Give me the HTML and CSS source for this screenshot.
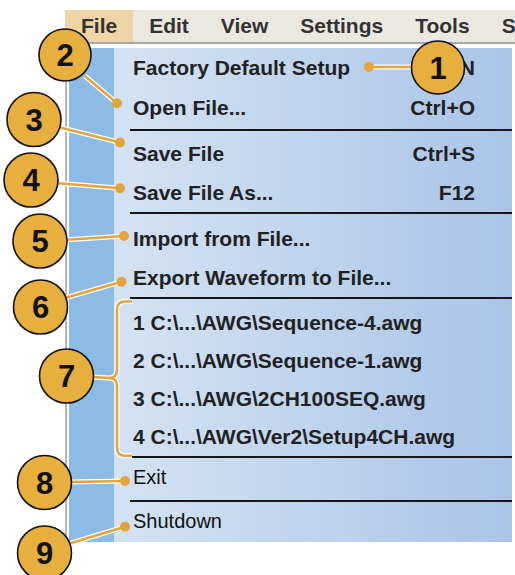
FILE: index.html
```html
<!DOCTYPE html>
<html lang="en">

<head>
  <meta charset="UTF-8">
  <meta name="viewport" content="width=device-width, initial-scale=1.0">
  <title>File Menu</title>

  <link rel="stylesheet" href="styles.css">
</head>

<body>
  <main class="page">
    <nav class="menubar">
      <span class="menu-title active">File</span>
      <span class="menu-title">Edit</span>
      <span class="menu-title">View</span>
      <span class="menu-title">Settings</span>
      <span class="menu-title">Tools</span>
      <span class="menu-title">System</span>
    </nav>

    <section class="frame">
      <div class="menu">
        <div class="stripe"></div>
        <ul class="panel">
          <li class="item tall"><span>Factory Default Setup</span><span>Ctrl+N</span></li>
          <li class="item tall"><span>Open File...</span><span>Ctrl+O</span></li>
          <li class="sep sep-first"></li>
          <li class="item"><span>Save File</span><span>Ctrl+S</span></li>
          <li class="item"><span>Save File As...</span><span>F12</span></li>
          <li class="sep"></li>
          <li class="item"><span>Import from File...</span></li>
          <li class="item"><span>Export Waveform to File...</span></li>
          <li class="sep"></li>
          <li class="item short"><span>1 C:\...\AWG\Sequence-4.awg</span></li>
          <li class="item short"><span>2 C:\...\AWG\Sequence-1.awg</span></li>
          <li class="item short"><span>3 C:\...\AWG\2CH100SEQ.awg</span></li>
          <li class="item short"><span>4 C:\...\AWG\Ver2\Setup4CH.awg</span></li>
          <li class="sep sep-tight"></li>
          <li class="item short plain"><span>Exit</span></li>
          <li class="sep sep-tight sep-low"></li>
          <li class="item short plain"><span>Shutdown</span></li>
        </ul>
      </div>
    </section>

    <!-- callouts sit on top of the menu -->
    <svg class="callouts" width="515" height="575" viewBox="0 0 515 575">
      <defs>
        <g id="leaders">
          <path d="M369 67 H412" />
          <path d="M85 76 L117 103.3" />
          <path d="M58 127 L120 142.5" />
          <path d="M55 183 L120 188.3" />
          <path d="M64 240 L124 236" />
          <path d="M65 298 L121.5 281.7" />
          <path d="M92 377 L109 378" />
          <path d="M132 301.5 H125 Q117 301.5 117 309.5 V370 Q117 378 109 378 Q117 378 117 386 V447.7 Q117 455.7 125 455.7 H132" />
          <path d="M70 482 L125 481" />
          <path d="M68 544 L125 526.7" />
        </g>
      </defs>
      <use href="#leaders" class="halo" />
      <use href="#leaders" class="leader" />

      <g class="dots">
        <circle cx="369" cy="67" r="5" />
        <circle cx="117" cy="103.3" r="5" />
        <circle cx="120" cy="142.5" r="5" />
        <circle cx="120" cy="188.3" r="5" />
        <circle cx="124" cy="236" r="5" />
        <circle cx="121.5" cy="281.7" r="5" />
        <circle cx="125" cy="481" r="5" />
        <circle cx="125" cy="526.7" r="5" />
      </g>

      <g class="badges">
        <circle cx="438" cy="67.5" r="26.5" />
        <circle cx="65" cy="55" r="26" />
        <circle cx="34" cy="119.5" r="27" />
        <circle cx="31" cy="180" r="27" />
        <circle cx="40" cy="241" r="27" />
        <circle cx="40.5" cy="307" r="27" />
        <circle cx="66.5" cy="376" r="27" />
        <circle cx="44.5" cy="482.5" r="27" />
        <circle cx="44.5" cy="553" r="27" />
      </g>
      <g class="numbers">
        <text x="438" y="78.5">1</text>
        <text x="65" y="66">2</text>
        <text x="34" y="130.5">3</text>
        <text x="31" y="191">4</text>
        <text x="40" y="252">5</text>
        <text x="40.5" y="318">6</text>
        <text x="66.5" y="387">7</text>
        <text x="44.5" y="493.5">8</text>
        <text x="44.5" y="564">9</text>
      </g>
    </svg>
  </main>
</body>

</html>
```

FILE: styles.css
```css
body {
  background: #fff;
  font-family: "Liberation Sans", Arial, sans-serif;
  margin: 0;
}

.page {
  box-sizing: border-box;
  height: 575px;
  overflow: hidden;
  padding-top: 10px;
  position: relative;
  width: 515px;
}

.menubar {
  background: #eae8e1;
  border-bottom: 2px solid #a9a8a4;
  display: flex;
  height: 32px;
  margin-left: 65px;
  overflow: hidden;
  white-space: nowrap;
}

.menu-title {
  color: #333;
  font-size: 21px;
  font-weight: bold;
  line-height: 32px;
  padding: 0 16px;
}

.menu-title.active {
  background: #efd4a8;
}

.frame {
  border-left: 2px solid #b7b7b7;
  margin-left: 65px;
  padding: 4px 0 0 2px;
}

.menu {
  display: flex;
}

.stripe {
  background: #8cbbe5;
  width: 45px;
}

.panel {
  background: linear-gradient(to right, #d4e3f3, #a9c4e7);
  list-style: none;
  margin: 0;
  padding: 0 0 2px 0;
  width: 398px;
}

.item {
  color: #222;
  display: flex;
  font-size: 21px;
  font-weight: bold;
  height: 39px;
  justify-content: space-between;
  line-height: 39px;
  padding: 0 37px 0 19px;
  white-space: nowrap;
}

.item.tall {
  height: 40px;
  line-height: 40px;
}

.item.short {
  height: 38px;
  line-height: 38px;
}

.item.plain {
  color: #111;
  font-size: 20px;
  font-weight: normal;
}

.sep {
  background: #161616;
  height: 2px;
  margin: 0 0 5px 16px;
}

.sep-first {
  margin-bottom: 3px;
  margin-top: 1px;
}

.sep-tight {
  margin-bottom: 0;
}

.sep-low {
  margin-top: 4px;
}

.callouts {
  left: 0;
  pointer-events: none;
  position: absolute;
  top: 0;
}

.halo {
  fill: none;
  stroke: #fff;
  stroke-width: 5;
}

.leader {
  fill: none;
  stroke: #e2a53c;
  stroke-width: 2.6;
}

.dots {
  fill: #e2a53c;
}

.badges {
  fill: #e6af3e;
  stroke: #111;
  stroke-width: 1.6;
}

.numbers {
  fill: #111;
  font-family: "Liberation Sans", Arial, sans-serif;
  font-size: 31px;
  font-weight: bold;
  text-anchor: middle;
}
```
